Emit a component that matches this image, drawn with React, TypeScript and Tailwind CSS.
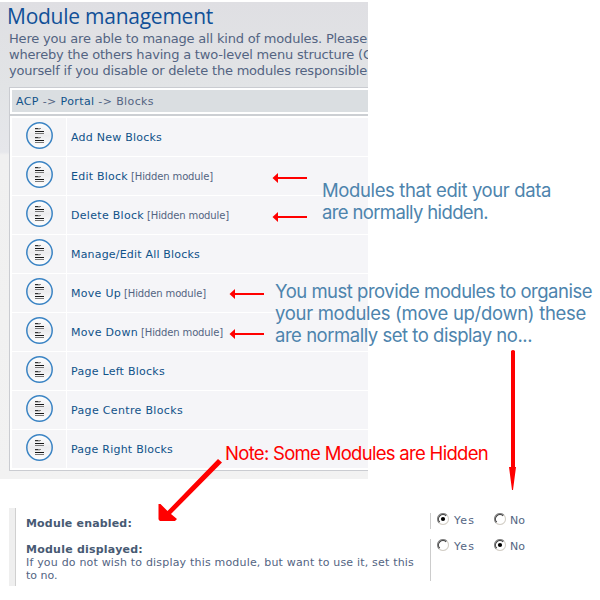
import { useLayoutEffect, useRef, useState, type ReactNode } from "react";

/** Inline run of text whose tracking is adjusted so that it spans `w` pixels. */
function Run({ w, className = "", children }: { w: number; className?: string; children: ReactNode }) {
  const ref = useRef<HTMLSpanElement>(null);
  const [spacing, setSpacing] = useState(0);
  useLayoutEffect(() => {
    const el = ref.current;
    if (!el) return;
    const n = (el.textContent ?? "").length;
    setSpacing((w - el.getBoundingClientRect().width) / n);
  }, [w]);
  return (
    <span ref={ref} className={`inline-block whitespace-pre ${className}`} style={{ letterSpacing: spacing }}>
      {children}
    </span>
  );
}

function ModuleIcon() {
  return (
    <svg width="28" height="28" viewBox="0 0 28 28" className="block">
      <defs>
        <linearGradient id="face" x1="0" y1="0" x2="0" y2="1">
          <stop offset="0" stopColor="#ffffff" />
          <stop offset="0.5" stopColor="#ececee" />
          <stop offset="1" stopColor="#ffffff" />
        </linearGradient>
      </defs>
      <circle cx="13.5" cy="13.5" r="12.7" fill="url(#face)" stroke="#3b84c4" strokeWidth="1.5" />
      {[6, 15].map((y) => (
        <g key={y} shapeRendering="crispEdges">
          <rect x="9" y={y} width="3" height="1" fill="#333" />
          <rect x="12" y={y} width="3" height="1" fill="#888" />
          <rect x="9" y={y + 1} width="5" height="1" fill="#c4c4c4" />
          <rect x="9" y={y + 3} width="9" height="1" fill="#161616" />
          <rect x="9" y={y + 5} width="9" height="1" fill="#777" />
        </g>
      ))}
    </svg>
  );
}

const rows = [
  { label: "Add New Blocks", w: 91, hidden: false },
  { label: "Edit Block", w: 57, hidden: true },
  { label: "Delete Block", w: 73, hidden: true },
  { label: "Manage/Edit All Blocks", w: 129, hidden: false },
  { label: "Move Up", w: 50, hidden: true },
  { label: "Move Down", w: 67, hidden: true },
  { label: "Page Left Blocks", w: 94, hidden: false },
  { label: "Page Centre Blocks", w: 112, hidden: false },
  { label: "Page Right Blocks", w: 102, hidden: false },
];

function Radio({ checked = false }: { checked?: boolean }) {
  return (
    <svg width="12" height="12" viewBox="0 0 12 12" className="block shrink-0">
      <circle cx="6" cy="6" r="5" fill="#fff" />
      <path d="M2.1 9.9A5.5 5.5 0 0 1 9.9 2.1" fill="none" stroke="#858585" strokeWidth="1.1" />
      <path d="M2.8 9.2A4.5 4.5 0 0 1 9.2 2.8" fill="none" stroke="#404040" strokeWidth="1.1" />
      <path d="M9.9 2.1A5.4 5.4 0 0 1 2.1 9.9" fill="none" stroke="#d4d0c8" strokeWidth="1.1" />
      {checked && <circle cx="6" cy="6" r="2.1" fill="#000" />}
    </svg>
  );
}

function Choice({ yes }: { yes: boolean }) {
  return (
    <div className="flex h-4 pl-[6px]">
      <Radio checked={yes} />
      <Run w={21} className="ml-[5px]">Yes</Run>
      <div className="ml-[19px]"><Radio checked={!yes} /></div>
      <Run w={15} className="ml-1">No</Run>
    </div>
  );
}

export default function App() {
  return (
    <div className="relative h-[600px] w-[600px] overflow-hidden bg-white pt-[2px] font-['DejaVu_Sans',sans-serif] text-[11px] leading-4 text-[#536482]">
      <main className="h-[477px] w-[368px] overflow-hidden bg-[linear-gradient(180deg,#dfdfe3_0px,#e2e4e6_85px,#e6e7eb_150px,#f0f0f0_153px,#f2f2f2_100%)]">
        <h1 className="h-[29px] pl-[7px] font-['Open_Sans',sans-serif] text-[21px] leading-[29px] text-[#115098]">
          <Run w={206}>Module management</Run>
        </h1>
        <div className="h-[56px] pl-[9px] text-[13px] leading-4">
          <div><Run w={358}>Here you are able to manage all kind of modules. Please</Run></div>
          <div className="whitespace-nowrap"><Run w={354}>whereby the others having a two-level menu structure (</Run>C</div>
          <div><Run w={358}>yourself if you disable or delete the modules responsible</Run></div>
        </div>
        <section className="ml-[9px] h-[384px] border border-r-0 border-[#caccd1] bg-white pl-[2px] pt-[2px]">
          <nav className="h-[22px] bg-[#dadee1] pl-1 pt-1">
            <Run w={138}>
              <span className="text-[#105289]">ACP</span> -&gt; <span className="text-[#105289]">Portal</span> -&gt; Blocks
            </Run>
          </nav>
          <div className="-ml-[2px] mt-[2px] h-[2px] bg-[#cccfd3]" />
          <div className="mt-[2px] grid gap-px">
            {rows.map((row) => (
              <div key={row.label} className="flex h-[38px] gap-px">
                <div className="w-[54px] bg-[#f5f5f7] pl-[14px] pt-1"><ModuleIcon /></div>
                <div className="flex-1 bg-[#f5f5f8] pl-1 pt-3">
                  <Run w={row.w} className="text-[#105289]">{row.label}</Run>
                  {row.hidden && <Run w={82} className="ml-[3px] text-[10px]">[Hidden module]</Run>}
                </div>
              </div>
            ))}
          </div>
        </section>
      </main>

      <section className="ml-[9px] mt-[29px] flex h-[78px] border-l-[6px] border-[#efefef]">
        <div className="flex w-[415px] flex-col border-l border-[#d0d0d0] pl-[10px] pt-[9px] leading-[13px]">
          <Run w={106} className="h-[26px] self-start font-bold text-[#475a73]">Module enabled:</Run>
          <Run w={117} className="self-start font-bold text-[#475a73]">Module displayed:</Run>
          <Run w={388} className="self-start">If you do not wish to display this module, but want to use it, set this</Run>
          <span>to no.</span>
        </div>
        <div className="flex flex-col gap-[10px] pt-[5px]">
          <div className="h-4 border-l border-[#ccc]"><Choice yes={true} /></div>
          <div className="h-[42px] border-l border-[#ccc]"><Choice yes={false} /></div>
        </div>
      </section>

      <div className="absolute left-[322px] top-[179px] font-[Inter,sans-serif] text-[18.5px] leading-[22px] text-[#4d84ad]">
        <div><Run w={229}>Modules that edit your data</Run></div>
        <div><Run w={166}>are normally hidden.</Run></div>
      </div>
      <div className="absolute left-[275px] top-[280px] font-[Inter,sans-serif] text-[18.5px] leading-[22px] text-[#4d84ad]">
        <div><Run w={317}>You must provide modules to organise</Run></div>
        <div><Run w={311}>your modules (move up/down) these</Run></div>
        <div><Run w={257}>are normally set to display no...</Run></div>
      </div>
      <div className="absolute left-[225px] top-[442px] font-[Inter,sans-serif] text-[18.5px] leading-[22px] text-[#ff0000]">
        <Run w={263}>Note: Some Modules are Hidden</Run>
      </div>

      <svg className="absolute left-0 top-0" width="600" height="600" fill="#ff0000">
        <path d="M272.500 178l5.500-5v4h29v2h-29v4z" />
        <path d="M272.500 217l5.500-5v4h29v2h-29v4z" />
        <path d="M229.500 294l5.500-5v4h29v2h-29v4z" />
        <path d="M229.500 334l5.500-5v4h29v2h-29v4z" />
        <path d="M511 351q2-2 4 0V467H516L513 490H512L509 467H511z" />
        <path d="M218 459l4 3.500L171 514l6 5-2 2H160q-1.500-1-1.500-2V504h2l7 7z" />
      </svg>
    </div>
  );
}
